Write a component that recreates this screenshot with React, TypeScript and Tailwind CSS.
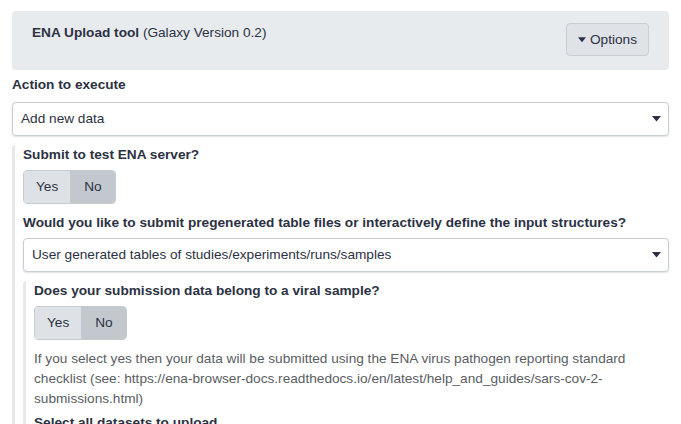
import React from "react";

const Caret = ({ className = "" }: { className?: string }) => (
  <svg width="9" height="6" viewBox="0 0 9 6" className={className}>
    <path d="M0 0 H9 L4.5 5.5 Z" fill="#2c3143" />
  </svg>
);

const Select = ({ value }: { value: string }) => (
  <div className="flex h-[34px] items-center justify-between rounded-[4px] border border-[#c9ced4] bg-white pl-[8px] pr-[7px] shadow-[0_1px_2px_rgba(0,0,0,0.12)]">
    <span>{value}</span>
    <Caret />
  </div>
);

const YesNo = () => (
  <div className="flex h-[34px] w-fit overflow-hidden rounded-[4px] border border-[#c5cbd1]">
    <div className="flex items-center bg-[#dee2e6] px-[12px]">Yes</div>
    <div className="flex items-center border-l border-[#c5cbd1] bg-[#c2c8ce] px-[13px]">No</div>
  </div>
);

const Label = ({ children }: { children: React.ReactNode }) => (
  <div className="h-[20px] font-bold leading-[20px]">{children}</div>
);

export default function App() {
  return (
    <div
      className="h-screen overflow-hidden bg-white px-[12px] pt-[11px] text-[13.65px] leading-[20px] text-[#2c3143]"
      style={{ fontFamily: '"Liberation Sans", Arial, sans-serif' }}
    >
      <div className="flex h-[59px] items-start justify-between rounded-[4px] bg-[#e8ebee] pl-[20px] pr-[20px] pt-[12px]">
        <div className="leading-[20px]">
          <span className="font-bold">ENA Upload tool</span> (Galaxy Version 0.2)
        </div>
        <div className="flex h-[33px] items-center gap-[4px] rounded-[4px] border border-[#c9ced3] bg-[#dfe3e7] px-[11px]">
          <Caret className="w-[8px]" />
          <span>Options</span>
        </div>
      </div>

      <div className="mt-[5px]">
        <Label>Action to execute</Label>
        <div className="mt-[7px]">
          <Select value="Add new data" />
        </div>
      </div>

      <div className="mt-[9px] rounded-tl-[4px] border-l-[3px] border-[#e6e9ec] pl-[8px]">
        <Label>Submit to test ENA server?</Label>
        <div className="mt-[5px]">
          <YesNo />
        </div>
        <div className="mt-[9px]">
          <Label>Would you like to submit pregenerated table files or interactively define the input structures?</Label>
        </div>
        <div className="mt-[5px]">
          <Select value="User generated tables of studies/experiments/runs/samples" />
        </div>

        <div className="mt-[9px] rounded-tl-[4px] border-l-[3px] border-[#e6e9ec] pl-[8px]">
          <Label>Does your submission data belong to a viral sample?</Label>
          <div className="mt-[5px]">
            <YesNo />
          </div>
          <div className="mt-[9px] text-[#5a5d63]">
            If you select yes then your data will be submitted using the ENA virus pathogen reporting standard
            checklist (see: https://ena-browser-docs.readthedocs.io/en/latest/help_and_guides/sars-cov-2-
            submissions.html)
          </div>
          <div className="mt-[4px]">
            <Label>Select all datasets to upload</Label>
          </div>
          <div className="h-[40px]" />
        </div>
      </div>
    </div>
  );
}
